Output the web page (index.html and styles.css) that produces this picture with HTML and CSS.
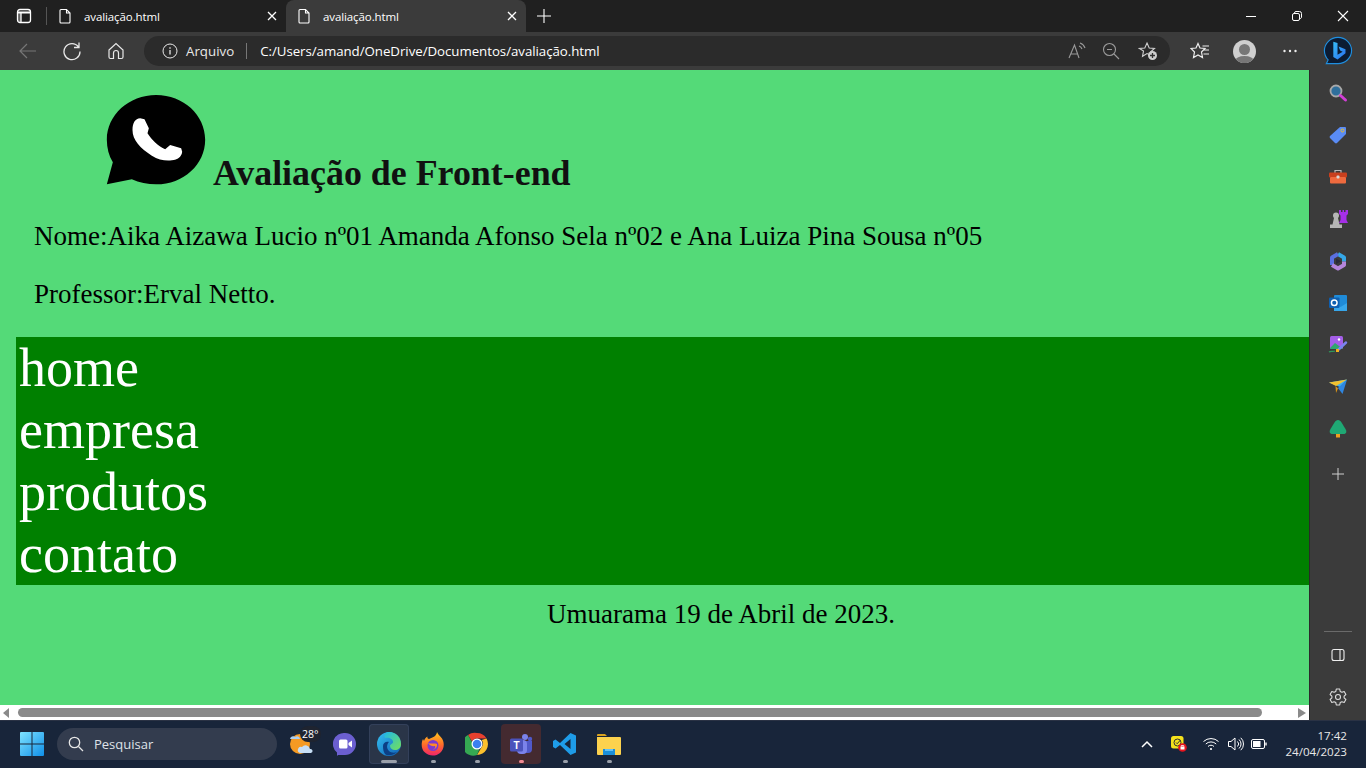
FILE: index.html
```html
<!DOCTYPE html>
<html lang="pt-BR">
<head>
<meta charset="utf-8">
<title>avaliação.html</title>
<link rel="stylesheet" href="styles.css">
</head>
<body>
<div class="app">
  <div class="tabstrip">
    <div class="tabactions">
      <svg class="ic16" viewBox="0 0 16 16" fill="none" stroke="#fff" stroke-width="1.300"><rect x="1.500" y="1.500" width="13" height="13" rx="2.500"/><path d="M1.500 4.500h13" stroke-width="2"/><path d="M5 5v9.500"/><rect x="1.500" y="5" width="3.500" height="9" rx="1" fill="#fff" stroke="none" opacity=".3"/></svg>
      <span class="tabsep"></span>
    </div>
    <div class="tab">
      <svg class="ic16" viewBox="0 0 16 16" fill="none" stroke="#fff" stroke-width="1.100"><path d="M4 1.500h5.500L13 5v9a1 1 0 0 1-1 1H4a1 1 0 0 1-1-1V2.500a1 1 0 0 1 1-1zM9.500 1.500V5H13"/></svg>
      <span class="tabtitle">avaliação.html</span>
      <svg class="tabx" viewBox="0 0 10 10" stroke="#fff" stroke-width="1.300"><path d="M1 1l8 8M9 1l-8 8"/></svg>
    </div>
    <div class="tab tab-active">
      <svg class="ic16" viewBox="0 0 16 16" fill="none" stroke="#fff" stroke-width="1.100"><path d="M4 1.500h5.500L13 5v9a1 1 0 0 1-1 1H4a1 1 0 0 1-1-1V2.500a1 1 0 0 1 1-1zM9.500 1.500V5H13"/></svg>
      <span class="tabtitle">avaliação.html</span>
      <svg class="tabx" viewBox="0 0 10 10" stroke="#fff" stroke-width="1.300"><path d="M1 1l8 8M9 1l-8 8"/></svg>
    </div>
    <svg class="newtab" viewBox="0 0 14 14" stroke="#fff" stroke-width="1.100"><path d="M7 0v14M0 7h14"/></svg>
    <div class="wincontrols">
      <svg class="winbtn" viewBox="0 0 46 16" fill="none" stroke="#fff" stroke-width="1"><path d="M18 8.500h10"/></svg>
      <svg class="winbtn" viewBox="0 0 46 16" fill="none" stroke="#fff" stroke-width="1"><rect x="18.500" y="5.500" width="7" height="7" rx="1.500"/><path d="M20.500 5.500V5a1.500 1.500 0 0 1 1.500-1.500h3.500A2 2 0 0 1 27.500 5.500V9a1.500 1.500 0 0 1-2 1.500"/></svg>
      <svg class="winbtn" viewBox="0 0 46 16" fill="none" stroke="#fff" stroke-width="1.100"><path d="M18 3l10 10M28 3L18 13"/></svg>
    </div>
  </div>

  <div class="toolbar">
    <svg class="tool tool-back" viewBox="0 0 20 20" fill="none" stroke="#777" stroke-width="1.200"><path d="M18 10H2M9 3l-7 7 7 7"/></svg>
    <svg class="tool tool-reload" viewBox="0 0 20 20" fill="none" stroke="#e8e8e8" stroke-width="1.300"><path d="M16.500 6A8 8 0 1 0 18 10.500M17 1.500V6.500H12"/></svg>
    <svg class="tool tool-home" viewBox="0 0 20 20" fill="none" stroke="#e8e8e8" stroke-width="1.200"><path d="M3 9l7-6.500L17 9v7a1.500 1.500 0 0 1-1.500 1.500H12.500V12a2.500 2.500 0 0 0-5 0v5.500H4.500A1.500 1.500 0 0 1 3 16z"/></svg>
    <div class="addressbar">
      <svg class="ic16 info" viewBox="0 0 16 16" fill="none" stroke="#e8e8e8" stroke-width="1"><circle cx="8" cy="8" r="7"/><path d="M8 7v4.500M8 4.300v1.400" stroke-width="1.300"/></svg>
      <span class="scheme">Arquivo</span>
      <span class="addrsep"></span>
      <span class="url">C:/Users/amand/OneDrive/Documentos/avaliação.html</span>
      <span class="addrspacer"></span>
      <svg class="addric" viewBox="0 0 20 20" fill="none" stroke="#9a9a9a" stroke-width="1.100"><path d="M2 17L7.500 4 12 17M4 13h7"/><path d="M12 5a5 5 0 0 1 3 3M13 2a8 8 0 0 1 5 5"/></svg>
      <svg class="addric addric-zoom" viewBox="0 0 20 20" fill="none" stroke="#9a9a9a" stroke-width="1.100"><circle cx="8.500" cy="8.500" r="6"/><path d="M6 8.500h5M13 13l5 5"/></svg>
      <svg class="addric addric-fav" viewBox="0 0 20 20" fill="none" stroke="#cfcfcf" stroke-width="1.100"><path d="M9 2l2.200 5 5.300.5-4 3.500 1 3.500-4.500-2-4.500 2.800 1-5.300L1.500 7.500 6.800 7z"/><circle cx="14.500" cy="14.500" r="4.500" fill="#cfcfcf" stroke="none"/><path d="M14.500 12v5M12 14.500h5" stroke="#333" stroke-width="1.300"/></svg>
    </div>
    <svg class="tool tool-favs" viewBox="0 0 20 20" fill="none" stroke="#eee" stroke-width="1.200"><path d="M8 2.500l2 4.500 5 .5-3.500 3.500 1 5.500L8 14l-4.500 2.500 1-5.500L1 7.500 6 7zM12.500 5H19M14 9h5M13.500 13H19"/></svg>
    <span class="avatar"><span class="avatar-head"></span><span class="avatar-body"></span></span>
    <svg class="tool tool-more" viewBox="0 0 20 20" fill="#eee"><circle cx="4.500" cy="10" r="1.200"/><circle cx="10" cy="10" r="1.200"/><circle cx="15.500" cy="10" r="1.200"/></svg>
    <svg class="bing" viewBox="0 0 32 32" fill="none"><defs><linearGradient id="bingG" x1="0" y1="0" x2="1" y2="1"><stop offset="0" stop-color="#37bdf8"/><stop offset="1" stop-color="#2a6ff0"/></linearGradient></defs><path d="M16 1.500C24 1.500 30.500 8 30.500 15.500S24 29.500 16 29.500H3.500L5.500 25.500C3 23 1.500 19.500 1.500 15.500 1.500 8 8 1.500 16 1.500z" fill="#0c1c33" stroke="#1f8fe0" stroke-width="1.200"/><path d="M11 6l4.500 1.500V20l5.500-3.200-2.700-1.300-1.700-4.200L24 14v4.500L15.500 25 11 22.500z" fill="url(#bingG)"/></svg>
  </div>

  <div class="middle">
    <div class="viewport">
      <main class="page">
        <header class="pagehead">
          <svg class="walogo" viewBox="50 30 295 270"><path d="M198 30C280 30 345 90 345 164S280 298 198 298C172 298 147 293 125 283L50 298 68 232C56 212 50 189 50 164 50 90 116 30 198 30Z" fill="#000"/><path d="M150 100C135 100 127 115 127 135 127 165 150 190 185 212 205 225 225 228 245 226 262 224 275 215 276 200L273 190 240 180 225 193C205 185 185 165 172 145L176 130 163 103Z" fill="#fff"/></svg>
          <h1 class="title">Avaliação de Front-end</h1>
        </header>
        <p class="info-line">Nome:Aika Aizawa Lucio nº01 Amanda Afonso Sela nº02 e Ana Luiza Pina Sousa nº05</p>
        <p class="info-line">Professor:Erval Netto.</p>
        <nav class="menu">
          <a class="menu-item">home</a>
          <a class="menu-item">empresa</a>
          <a class="menu-item">produtos</a>
          <a class="menu-item">contato</a>
        </nav>
        <p class="dateline">Umuarama 19 de Abril de 2023.</p>
      </main>
      <div class="hscroll">
        <span class="arrow arrow-left"></span>
        <span class="thumb"></span>
        <span class="arrow arrow-right"></span>
      </div>
    </div>
    <aside class="sidebar">
      <span class="sideitem"><svg class="side-ic" viewBox="0 0 20 20" fill="none"><circle cx="8" cy="8" r="5.500" fill="#2f6f9c" stroke="#a8a8a8" stroke-width="1.800"/><path d="M12.500 12.500L17.500 17" stroke="#d23fd6" stroke-width="3" stroke-linecap="round"/></svg></span>
      <span class="sideitem"><svg class="side-ic" viewBox="0 0 20 20"><path d="M12 2h5a1 1 0 0 1 1 1v6L9 18a1.500 1.500 0 0 1-2 0L2 13a1.500 1.500 0 0 1 0-2z" fill="#5a8cf5"/><circle cx="14.500" cy="5.500" r="1.500" fill="#5a8cf5" stroke="#f0c020" stroke-width="1"/></svg></span>
      <span class="sideitem"><svg class="side-ic" viewBox="0 0 20 20"><path d="M7 6V3.500h6V6" fill="none" stroke="#b8b8b8" stroke-width="1.200"/><rect x="1" y="5.500" width="18" height="5" rx="1" fill="#c8401e"/><rect x="2" y="10" width="16" height="6.500" rx="1" fill="#ee6a3e"/><rect x="8.500" y="8.500" width="3" height="3" rx="1" fill="#d8d8d8"/></svg></span>
      <span class="sideitem"><svg class="side-ic" viewBox="0 0 20 20"><path d="M11 1h2v2h1.500V1h1.500v2h1.500V1H20v4l-1.500 1.500V11L20 14h-9l1.500-3V6.500L11 5z" fill="#a62fe8"/><circle cx="8" cy="6.500" r="3" fill="#b5b5b5"/><path d="M6 9h4l1.500 6.500H4.500zM2 15.500h12V19H2z" fill="#b5b5b5"/></svg></span>
      <span class="sideitem"><svg class="side-ic" viewBox="0 0 20 20" fill="none" stroke-width="4" stroke-linejoin="round"><path d="M10 3l6 3.500v4" stroke="#35a8e8"/><path d="M4 14V6.500L10 3" stroke="#5a70e0"/><path d="M4 14l6 3.500 6-3.500v-3.500" stroke="#b585dc"/><path d="M8 7.500l5 2.700L8 13z" fill="#2a2a3a" stroke="none"/></svg></span>
      <span class="sideitem"><svg class="side-ic" viewBox="0 0 20 20"><rect x="6" y="2" width="13" height="16" rx="1" fill="#1f8bd8"/><path d="M6 10l6.500 4L19 10v8H6z" fill="#37a6ea"/><rect x="1" y="4.500" width="10.500" height="10.500" rx="1" fill="#0f5fb0"/><circle cx="6.250" cy="9.750" r="2.800" fill="none" stroke="#fff" stroke-width="1.500"/></svg></span>
      <span class="sideitem"><svg class="side-ic" viewBox="0 0 20 20"><rect x="2" y="1" width="13" height="13" rx="1.500" fill="#a45ee8"/><path d="M2 13l5-5 4 3 4 3H3.500A1.500 1.500 0 0 1 2 13z" fill="#30a76e"/><circle cx="11" cy="4.500" r="1.200" fill="#fff"/><path d="M9.500 15.500L18 7.500" stroke="#7a82f0" stroke-width="2.500" stroke-linecap="round"/><rect x="8" y="14" width="3" height="3" fill="#f2b01e"/><path d="M1 17c2-1.500 4 0 6-1" stroke="#2f9a5c" stroke-width="1.200" fill="none"/></svg></span>
      <span class="sideitem"><svg class="side-ic" viewBox="0 0 20 20"><path d="M1 5.500L19 2.500 12 10z" fill="#40b0f0"/><path d="M19 2.500L14.500 17 10 11z" fill="#2f86e0"/><path d="M1 5.500l18-3-11 6.500z" fill="#f2c230"/><path d="M7.500 9L8 16l2-4.500z" fill="#d99318"/></svg></span>
      <span class="sideitem"><svg class="side-ic" viewBox="0 0 20 20"><path d="M10 1c1.500 0 2.500 1 3.200 2l4.300 7c1.500 2.500 1 5-2 5h-11c-3 0-3.500-2.500-2-5l4.300-7C7.500 2 8.500 1 10 1z" fill="#1fa874"/><rect x="8" y="15" width="4" height="3.500" fill="#f0a020"/></svg></span>
      <span class="sideitem"><svg class="side-plus" viewBox="0 0 12 12" stroke="#cfcfcf" stroke-width="1"><path d="M6 0v12M0 6h12"/></svg></span>
      <span class="sidespacer"></span>
      <span class="sideline"></span>
      <span class="sideitem"><svg class="ic16" viewBox="0 0 16 16" fill="none" stroke="#eee" stroke-width="1.100"><rect x="2" y="2.500" width="12" height="11" rx="2"/><path d="M10 2.500v11"/></svg></span>
      <span class="sideitem"><svg class="side-ic" viewBox="0 0 20 20" fill="none" stroke="#dcdcdc" stroke-width="1.100"><circle cx="10" cy="10" r="2.500"/><path d="M8.300 2h3.400l.5 2.400 1.700.9 2.300-.8 1.700 3-1.800 1.600v1.800l1.800 1.600-1.700 3-2.300-.8-1.700.9-.5 2.400H8.300l-.5-2.400-1.700-.9-2.300.8-1.700-3 1.800-1.600V9.100L2.100 7.500l1.700-3 2.300.8 1.700-.9z" stroke-linejoin="round"/></svg></span>
    </aside>
  </div>

  <footer class="taskbar">
    <svg class="startlogo" viewBox="0 0 24 24"><defs><linearGradient id="winG" x1="0" y1="0" x2="1" y2="1"><stop offset="0" stop-color="#7fe3ff"/><stop offset="1" stop-color="#0f8fe8"/></linearGradient></defs><path d="M0 1a1 1 0 0 1 1-1h10.500v11.500H0zM12.500 0H23a1 1 0 0 1 1 1v10.500H12.500zM0 12.500h11.500V24H1a1 1 0 0 1-1-1zM12.500 12.500H24V23a1 1 0 0 1-1 1H12.500z" fill="url(#winG)"/></svg>
    <div class="searchbox">
      <svg class="ic16" viewBox="0 0 16 16" fill="none" stroke="#e6e6e6" stroke-width="1.300"><circle cx="6.500" cy="6.500" r="5.200"/><path d="M10.500 10.500L15 15"/></svg>
      <span class="searchtext">Pesquisar</span>
    </div>
    <div class="tasks">
      <span class="task task-weather">
        <svg class="task-ic" viewBox="0 0 24 24"><circle cx="11" cy="12" r="10" fill="#f59a23"/><path d="M1 7a3 3 0 0 1 5-2 3 3 0 0 1 5 2z" fill="#a9cdf0"/><path d="M11 21a3 3 0 0 1 2-6 4.500 4.500 0 0 1 8 2 2 2 0 0 1 1 4z" fill="#c6def5"/></svg>
        <span class="temp">28°</span>
      </span>
      <span class="task"><svg class="task-ic" viewBox="0 0 24 24"><path d="M12 1a11 11 0 0 1 0 22H5l-1 1v-3.500A11 11 0 0 1 12 1z" fill="#6b5fd0"/><rect x="6" y="7.500" width="8.500" height="9" rx="1.500" fill="#fff"/><path d="M15.500 11l3.500-2.500v7L15.500 13z" fill="#fff"/></svg></span>
      <span class="task task-open task-focus"><svg class="task-ic" viewBox="0 0 24 24"><defs><linearGradient id="edgeG" x1="0" y1="0" x2="1" y2="1"><stop offset="0" stop-color="#35c1f1"/><stop offset="1" stop-color="#0f5fb5"/></linearGradient><linearGradient id="edgeH" x1="0" y1="0" x2="1" y2="1"><stop offset="0" stop-color="#1fb8e8"/><stop offset="1" stop-color="#74e05a"/></linearGradient></defs><circle cx="12" cy="12" r="12" fill="url(#edgeG)"/><path d="M12 0c7 0 12 5 12 12 0 4-3 6-6 6s-5-2-5-4 3-2 3-4c0-3-4-5-8-4C6 2.500 9 0 12 0z" fill="url(#edgeH)"/><path d="M6 14c0-3 3-5 6-4-2 2-3 6 0 9 2 2 6 2 8 1-4 4-10 4-12 2-1.500-2-2-5-2-8z" fill="#0c3f85"/></svg><span class="pip pip-wide"></span></span>
      <span class="task task-open"><svg class="task-ic" viewBox="0 0 24 24"><defs><linearGradient id="ffG" x1="0" y1="0" x2="0" y2="1"><stop offset="0" stop-color="#ffc81e"/><stop offset=".55" stop-color="#ff6a2a"/><stop offset="1" stop-color="#f0246a"/></linearGradient></defs><path d="M16 0c1 3 3 3.500 5 6.500 3 5 2 11-2 14.500-4 3.500-11 3.500-15-.5C0 17 0 11 2 7l1 2c.5-2 2-4 3.500-4.500C6 6 7 7 8 7c2-1 5-2 6-3 1-1.500 2-2.500 2-4z" fill="url(#ffG)"/><circle cx="12" cy="13.500" r="5.500" fill="#7d3ad0"/><path d="M7 11c2 1 7 0 9 1 .5 3-2 6-5 5.500 2 0 4-1.500 3-3.500-2 .5-5 0-7-3z" fill="#ff8a2a"/></svg><span class="pip"></span></span>
      <span class="task task-open"><svg class="task-ic" viewBox="0 0 24 24"><path d="M12 1a11 11 0 0 1 9.500 5.500H12A5.500 5.500 0 0 0 7 9.500L3 3A11 11 0 0 1 12 1z" fill="#e8402e"/><path d="M21.500 6.500A11 11 0 0 1 12 23l4.700-8A5.500 5.500 0 0 0 16.500 8z" fill="#fbc02d"/><path d="M12 23A11 11 0 0 1 3 3l4.500 8a5.500 5.500 0 0 0 7 6z" fill="#35a852"/><circle cx="12" cy="12" r="5.500" fill="#fff"/><circle cx="12" cy="12" r="4.300" fill="#3a80f0"/></svg><span class="pip"></span></span>
      <span class="task task-open task-alert"><svg class="task-ic" viewBox="0 0 24 24"><circle cx="16" cy="5" r="3" fill="#7b83eb"/><circle cx="21" cy="7" r="2.200" fill="#5059c9"/><path d="M11 9h12v8a4 4 0 0 1-4 4h-1a7 7 0 0 1-7-7z" fill="#5059c9"/><rect x="8" y="8" width="10" height="14" rx="4" fill="#7b83eb"/><rect x="1" y="6.500" width="13" height="13" rx="1.500" fill="#4b53bc"/><text class="teams-t" x="7.500" y="17">T</text></svg><span class="pip pip-red"></span></span>
      <span class="task task-open"><svg class="task-ic" viewBox="0 0 24 24"><path d="M17.500 1L23 3.500v17L17.500 23 7 13l-4.500 3.500L0 15V9l2.500-1.500L7 11zM17.500 7l-6 5 6 5z" fill="#1e9ce8" fill-rule="evenodd"/></svg><span class="pip"></span></span>
      <span class="task task-open"><svg class="task-ic" viewBox="0 0 24 24"><path d="M0 3a1 1 0 0 1 1-1h7l2 2h-10z" fill="#d9a21f"/><path d="M0 5h23a1 1 0 0 1 1 1v16a1 1 0 0 1-1 1H1a1 1 0 0 1-1-1z" fill="#fcd24e"/><rect x="6" y="17" width="12" height="6" fill="#1b8fd8"/><rect x="8" y="17" width="8" height="2" fill="#64c2f5"/></svg><span class="pip"></span></span>
    </div>
    <span class="taskspacer"></span>
    <div class="tray">
      <svg class="tray-chev" viewBox="0 0 12 8" fill="none" stroke="#fff" stroke-width="1.500"><path d="M1 7l5-5 5 5"/></svg>
      <svg class="tray-app" viewBox="0 0 16 16"><rect x="0" y="0" width="12.500" height="12.500" rx="2.500" fill="#f5e21c"/><circle cx="6.500" cy="6.500" r="3.500" fill="none" stroke="#333" stroke-width="1"/><path d="M5 6.500l1.200 1.200L9.500 4" fill="none" stroke="#333" stroke-width="1"/><circle cx="11.500" cy="11.500" r="4.300" fill="#e5141e"/><rect x="9.500" y="10.500" width="4" height="3" fill="#fff"/><path d="M10.300 10.500V9.500h2.400v1" fill="none" stroke="#fff" stroke-width=".8"/></svg>
      <svg class="tray-wifi" viewBox="0 0 16 14" fill="none" stroke="#fff" stroke-width="1"><path d="M.5 4.500a11 11 0 0 1 15 0M2.800 7a7.500 7.500 0 0 1 10.400 0M5 9.500a4.200 4.200 0 0 1 6 0"/><circle cx="8" cy="12" r="1.100" fill="#fff" stroke="none"/></svg>
      <svg class="tray-vol" viewBox="0 0 16 14" fill="none" stroke="#fff" stroke-width="1"><path d="M.5 4.500h2.500L7 1v12L3 9.500H.5zM9.500 4.500a3.500 3.500 0 0 1 0 5M11 2.500a6 6 0 0 1 0 9M12.800.8a8.500 8.500 0 0 1 0 12.400"/></svg>
      <svg class="tray-batt" viewBox="0 0 16 10" fill="none" stroke="#fff" stroke-width="1"><rect x=".5" y=".5" width="13" height="9" rx="1.500"/><rect x="2" y="2" width="7.500" height="6" fill="#fff" stroke="none"/><path d="M15 3.500v3" stroke-width="1.400"/></svg>
      <div class="clock"><span>17:42</span><span>24/04/2023</span></div>
    </div>
  </footer>
</div>
</body>
</html>
```
FILE: styles.css
```css
* { box-sizing: border-box; }
html, body { margin: 0; height: 100%; overflow: hidden; }
body { font-family: "Open Sans", "Noto Sans", sans-serif; color: #fff; }
svg { display: block; flex: none; }
.app { width: 1366px; height: 768px; display: flex; flex-direction: column; background: #3b3b3b; }
.ic16 { width: 16px; height: 16px; }

/* tab strip */
.tabstrip { height: 32px; background: #202020; display: flex; align-items: stretch; flex: none; }
.tabactions { width: 48px; display: flex; align-items: center; padding-left: 16px; gap: 14px; }
.tabsep { width: 1px; height: 18px; background: #555; }
.tab { width: 238px; display: flex; align-items: center; padding: 0 9px; font-size: 11.500px; }
.tab-active { background: #3b3b3b; border-radius: 8px 8px 0 0; width: 240px; padding-left: 10px; }
.tabtitle { margin-left: 11px; flex: 1; white-space: nowrap; letter-spacing: -.1px; }
.tabx { width: 10px; height: 10px; }
.newtab { width: 14px; height: 14px; margin: 9px 0 0 11px; }
.wincontrols { margin-left: auto; display: flex; align-items: center; }
.winbtn { width: 46px; height: 16px; }

/* toolbar */
.toolbar { height: 38px; background: #3b3b3b; display: flex; align-items: center; padding-left: 18px; flex: none; }
.tool { width: 20px; height: 20px; }
.tool-reload { margin-left: 24px; }
.tool-home { margin-left: 24px; }
.addressbar { width: 1026px; height: 30px; margin-left: 18px; border-radius: 15px; background: #2b2b2b; display: flex; align-items: center; padding: 0 12px 0 18px; font-size: 13.300px; }
.info { margin-right: 8px; }
.scheme { color: #e8e8e8; }
.addrsep { width: 1px; height: 16px; background: #777; margin: 0 13px 0 12px; }
.url { white-space: nowrap; letter-spacing: -.05px; }
.addrspacer { flex: 1; }
.addric { width: 20px; height: 20px; margin-left: 16px; }
.addric-zoom { margin-left: 14px; }
.addric-fav { margin-left: 17px; }
.tool-favs { margin-left: 20px; }
.avatar { width: 23px; height: 23px; border-radius: 50%; background: #cfcfcf; margin-left: 23px; position: relative; overflow: hidden; flex: none; }
.avatar-head { position: absolute; width: 11px; height: 11px; left: 6px; top: 4px; border-radius: 50%; background: #777; }
.avatar-body { position: absolute; width: 19px; height: 10px; left: 2px; top: 16px; border-radius: 50%; background: #777; }
.tool-more { margin-left: 24px; }
.bing { width: 30px; height: 32px; margin-left: 23px; }

/* middle */
.middle { height: 650px; display: flex; flex: none; }
.viewport { width: 1310px; display: flex; flex-direction: column; border-right: 1px solid #2a2a2a; }
.page { height: 635px; background: #54da78; overflow: hidden; padding-left: 16px; padding-top: 1px; font-family: "Liberation Serif", serif; color: #000; }
.pagehead { display: flex; align-items: flex-end; margin: 23px 0 0 90px; height: 91px; }
.walogo { width: 100px; height: 90px; }
.title { margin: 0 0 -9px 7px; font-size: 35.900px; line-height: 41px; font-weight: bold; color: #111; white-space: nowrap; }
.info-line { margin: 0; padding-left: 18px; font-size: 27px; line-height: 31px; white-space: nowrap; }
.pagehead + .info-line { margin-top: 36px; }
.info-line + .info-line { margin-top: 27px; }
.menu { margin-top: 27px; background: #008000; display: flex; flex-direction: column; padding-left: 3px; }
.menu-item { font-size: 54px; line-height: 62px; color: #fff; }
.dateline { margin: 14px 0 0 531px; font-size: 27px; line-height: 31px; white-space: nowrap; }

/* scrollbar */
.hscroll { height: 15px; background: #fff; display: flex; align-items: center; padding: 0 3px; }
.arrow { width: 0; height: 0; border-top: 5px solid transparent; border-bottom: 5px solid transparent; }
.arrow-left { border-right: 6px solid #8a8a8a; }
.arrow-right { border-left: 8px solid #8a8a8a; margin-left: 36px; }
.thumb { width: 1244px; height: 9px; margin-left: 9px; border-radius: 5px; background: #8a8a8a; }

/* sidebar */
.sidebar { width: 56px; background: #3b3b3b; display: flex; flex-direction: column; align-items: center; padding: 2px 0 2px; }
.sideitem { height: 42px; width: 100%; display: flex; align-items: center; justify-content: center; flex: none; }
.side-ic { width: 20px; height: 20px; }
.side-plus { width: 12px; height: 12px; margin-top: 6px; }
.sidespacer { flex: 1; }
.sideline { width: 28px; height: 1px; background: #6a6a6a; flex: none; margin-bottom: 2px; }

/* taskbar */
.taskbar { height: 48px; background: #18253a; display: flex; align-items: center; padding: 0 0 1px 20px; flex: none; border-top: 1px solid #2a3244; }
.startlogo { width: 24px; height: 24px; }
.searchbox { width: 220px; height: 32px; margin-left: 13px; border-radius: 16px; background: #333c4e; display: flex; align-items: center; padding-left: 11px; font-size: 13px; color: #dfe2e8; }
.searchtext { margin-left: 10px; }
.tasks { display: flex; margin-left: 2px; }
.task { width: 44px; height: 40px; display: flex; align-items: center; justify-content: center; position: relative; border-radius: 4px; flex: none; }
.task-ic { width: 24px; height: 24px; }
.task-focus { background: #2a3548; box-shadow: inset 0 0 0 1px #33405a; width: 40px; margin: 0 2px; }
.task-alert { background: #442a30; width: 40px; margin: 0 2px; }
.task-open .pip { position: absolute; left: 50%; bottom: 1px; width: 5px; height: 3px; margin-left: -2.500px; border-radius: 2px; background: #9aa0aa; }
.task-open .pip-wide { width: 16px; margin-left: -8px; }
.task-open .pip-red { background: #f08a94; }
.temp { position: absolute; top: 2px; left: 21px; padding: 0 2px; height: 16px; border-radius: 8px; background: #1f2430; font-size: 10.500px; line-height: 16px; color: #fff; }
.teams-t { font: bold 10px "Liberation Sans", sans-serif; fill: #fff; text-anchor: middle; }
.taskspacer { flex: 1; }
.tray { display: flex; align-items: center; padding-right: 19px; }
.tray-chev { width: 12px; height: 8px; margin-right: 18px; }
.tray-app { width: 16px; height: 16px; margin-right: 16px; }
.tray-wifi { width: 16px; height: 14px; margin-right: 9px; }
.tray-vol { width: 16px; height: 14px; margin-right: 7px; }
.tray-batt { width: 16px; height: 10px; margin-right: 18px; }
.clock { display: flex; flex-direction: column; align-items: flex-end; font-size: 11.600px; line-height: 16px; color: #e8e8e8; }
```
